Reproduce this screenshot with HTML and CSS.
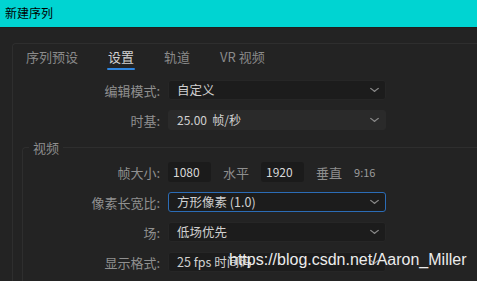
FILE: index.html
```html
<!DOCTYPE html>
<html lang="zh-CN">
<head>
    <meta charset="UTF-8">
    <title>新建序列</title>
    <link rel="stylesheet" href="styles.css">
</head>
<body>
    <div class="titlebar">新建序列</div>

    <div class="main">
        <div class="panel">
            <!-- Tabs -->
            <div class="tabs">
                <span class="tab">序列预设</span>
                <span class="tab active">设置</span>
                <span class="tab">轨道</span>
                <span class="tab">VR 视频</span>
            </div>

            <div class="form-row">
                <span class="label">编辑模式:</span>
                <div class="select">自定义<span class="chev"></span></div>
            </div>
            <div class="form-row">
                <span class="label">时基:</span>
                <div class="select disabled">25.00&nbsp; 帧/秒<span class="chev"></span></div>
            </div>

            <!-- Video section -->
            <div class="section">
                <div class="section-title">视频</div>

                <div class="form-row">
                    <span class="label">帧大小:</span>
                    <div class="field">1080</div>
                    <span class="unit">水平</span>
                    <div class="field">1920</div>
                    <span class="unit">垂直</span>
                    <span class="ratio">9:16</span>
                </div>
                <div class="form-row">
                    <span class="label">像素长宽比:</span>
                    <div class="select focus">方形像素 (1.0)<span class="chev"></span></div>
                </div>
                <div class="form-row">
                    <span class="label">场:</span>
                    <div class="select">低场优先<span class="chev"></span></div>
                </div>
                <div class="form-row">
                    <span class="label">显示格式:</span>
                    <div class="select">25 fps 时间码<span class="chev"></span></div>
                </div>
            </div>
        </div>
    </div>

    <div class="watermark">https://blog.csdn.net/Aaron_Miller</div>
</body>
</html>
```

FILE: styles.css
```css
/* General Styling */
body {
    margin: 0;
    overflow: hidden;
    height: 281px;
    background-color: #232323;
    font-family: "Noto Sans CJK SC", "Noto Sans", sans-serif;
    color: #8e8e8e;
    position: relative;
}

.titlebar {
    height: 28px;
    line-height: 26px;
    padding-left: 5px;
    background-color: #00d4d2;
    color: #000;
    font-size: 12px;
    border-bottom: 1px solid #1e1e1e;
    box-sizing: border-box;
}

.main {
    padding: 15px 0 0 12px;
}

.panel {
    border-top: 1px solid #2e2e2e;
    border-left: 1px solid #2e2e2e;
    border-top-left-radius: 4px;
    height: 237px;
    overflow: hidden;
}

/* Tabs */
.tabs {
    display: flex;
    gap: 30px;
    padding: 3px 0 0 13px;
    height: 24px;
    margin-bottom: 9px;
}

.tab {
    font-size: 13px;
    line-height: 20px;
    color: #8a8a8a;
    position: relative;
}

.tab.active {
    color: #d2d2d2;
}

.tab.active::after {
    content: "";
    position: absolute;
    left: -1px;
    right: -1px;
    top: 21px;
    height: 2px;
    border-radius: 1px;
    background-color: #2f86e0;
}

/* Form rows */
.form-row {
    display: flex;
    align-items: center;
    gap: 12px;
    height: 20px;
    margin-bottom: 10px;
}

.form-row:last-child {
    margin-bottom: 0;
}

.label {
    width: 147px;
    margin-right: -4px;
    text-align: right;
    font-size: 13px;
    color: #909090;
}

.select {
    position: relative;
    width: 218px;
    height: 20px;
    box-sizing: border-box;
    padding-left: 8px;
    line-height: 18px;
    font-size: 12.5px;
    color: #d0d0d0;
    background-color: #1c1c1c;
    border: 1px solid #262626;
    border-radius: 3px;
}

.select.disabled {
    background-color: #2a2a2a;
    border-color: #2a2a2a;
    font-size: 12px;
}

.select.focus {
    border-color: #2b6cb6;
}

.chev {
    position: absolute;
    right: 8px;
    top: 5px;
    width: 4px;
    height: 4px;
    border-right: 1px solid #8a8a8a;
    border-bottom: 1px solid #8a8a8a;
    transform: scaleX(1.3) rotate(45deg);
}

.field {
    width: 43px;
    height: 20px;
    box-sizing: border-box;
    padding-left: 5px;
    line-height: 20px;
    font-size: 12px;
    color: #d8d8d8;
    background-color: #1b1b1b;
    border-radius: 3px;
}

.unit {
    font-size: 13px;
    color: #8e8e8e;
}

.ratio {
    font-size: 11px;
    color: #9a9a9a;
}

/* Video section */
.section {
    margin-left: 9px;
    border-top: 1px solid #2e2e2e;
    border-left: 1px solid #2e2e2e;
    border-top-left-radius: 4px;
    margin-top: 17px;
    position: relative;
    padding-top: 14px;
    height: 200px;
}

.section-title {
    position: absolute;
    top: -10px;
    left: 6px;
    padding: 0 4px;
    font-size: 13px;
    line-height: 20px;
    color: #8e8e8e;
    background-color: #232323;
}

.section .label {
    width: 137px;
}

.watermark {
    position: absolute;
    left: 229px;
    top: 251px;
    font-family: "Liberation Sans", Arial, sans-serif;
    font-size: 16px;
    color: #ececec;
}
```
